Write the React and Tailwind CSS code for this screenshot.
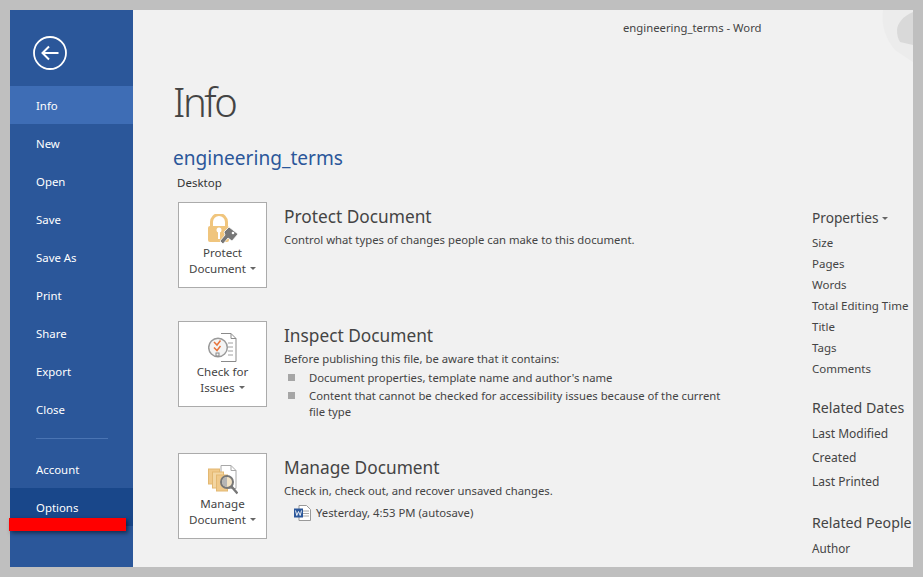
const font = "[font-family:'Noto_Sans','Open_Sans',sans-serif]";

const navTop = ['New', 'Open', 'Save', 'Save As', 'Print', 'Share', 'Export', 'Close'];
const props = ['Size', 'Pages', 'Words', 'Total Editing Time', 'Title', 'Tags', 'Comments'];

function Caret() {
  return <span className="inline-block ml-[4px] mb-[2px] align-middle w-0 h-0 border-x-[3px] border-x-transparent border-t-[3px] border-t-[#666]" />;
}

function LockIcon() {
  return (
    <svg width="30" height="30" viewBox="0 0 30 30">
      <path d="M3.500 12V8a7.500 7.500 0 0 1 15 0v4" fill="none" stroke="#f0c57d" strokeWidth="3" />
      <rect x="0" y="12" width="21" height="16" rx="2" fill="#f0c57d" />
      <circle cx="11" cy="16" r="2.500" fill="#fff" />
      <rect x="10" y="16" width="2" height="9" fill="#fff" />
      <path d="M21 13l9 7-6 7-4-3-5 6-3-3 5-6-1-3z" fill="#777" stroke="#fff" strokeWidth=".8" />
      <circle cx="25" cy="19" r="1.300" fill="#fff" />
    </svg>
  );
}

function CheckIcon() {
  return (
    <svg width="29" height="29" viewBox="0 0 29 29">
      <path d="M13 .5h10l5 5v23H13" fill="#fff" stroke="#8a8a8a" />
      <path d="M23 .5v5h5" fill="none" stroke="#8a8a8a" />
      <path d="M20 10h5M20 14h5M20 18h5M20 22h5" stroke="#a0a0a0" />
      <circle cx="10" cy="14.500" r="9.300" fill="#f4f4f4" stroke="#9a9a9a" strokeWidth="1.500" />
      <path d="M6 9l3 3 3.500-4.500M6 14.500l3 3 3.500-4.500" fill="none" stroke="#e8743b" strokeWidth="1.500" />
      <rect x="8" y="20" width="3" height="3" fill="none" stroke="#888" />
    </svg>
  );
}

function ManageIcon() {
  return (
    <svg width="30" height="30" viewBox="0 0 30 30">
      <path d="M13 .5h10l5 5v18H13z" fill="#fff" stroke="#a8a8a8" />
      <path d="M23 .5v5h5" fill="none" stroke="#a8a8a8" />
      <rect x="0.500" y="4" width="11" height="15" fill="#f0c98a" stroke="#e3b872" />
      <rect x="4.500" y="7" width="11" height="16" fill="#f3d6a3" stroke="#e3b872" />
      <rect x="8.500" y="10" width="11" height="16" fill="#f0c98a" stroke="#e3b872" />
      <circle cx="19" cy="17" r="6" fill="#f2e2c4" stroke="#777" strokeWidth="2" />
      <path d="M19 12a5 5 0 0 0 0 10z" fill="#b5b5b5" />
      <path d="M23.500 21.500l6 7" stroke="#777" strokeWidth="2.500" />
    </svg>
  );
}

function WordIcon() {
  return (
    <svg width="17" height="16" viewBox="0 0 17 16">
      <path d="M5 .5h7.500l4 4v11H5z" fill="#fff" stroke="#999" />
      <path d="M9 6h6M9 8.500h6M9 11h6" stroke="#aaa" />
      <rect x="0" y="3.500" width="9" height="9" fill="#2b579a" />
      <path d="M1.500 5.500l1.300 5 1.700-4 1.700 4 1.300-5" fill="none" stroke="#fff" strokeWidth=".9" />
    </svg>
  );
}

function ActionButton({ icon, line1, line2 }) {
  return (
    <div className="w-[89px] h-[86px] shrink-0 bg-white border border-[#ababab] flex flex-col items-center pt-[11px]">
      <div className="h-[31px] flex items-start justify-center">{icon}</div>
      <div className="text-[11.6px] leading-[16px] text-[#444] text-center whitespace-nowrap">
        <div>{line1}</div>
        <div>{line2}<Caret /></div>
      </div>
    </div>
  );
}

function Section({ icon, line1, line2, title, children, className }) {
  return (
    <div className={`flex h-[86px] ${className}`}>
      <ActionButton icon={icon} line1={line1} line2={line2} />
      <div className="ml-[17px] w-[440px] text-[#444]">
        <h2 className="text-[17.3px] leading-[26px] mt-[2px] text-[#444]">{title}</h2>
        {children}
      </div>
    </div>
  );
}

function Bullet({ children, className = 'mt-[2px]' }) {
  return (
    <div className={`flex text-[11.3px] leading-[16px] ${className}`}>
      <span className="w-[7px] h-[7px] bg-[#a6a6a6] mt-[4px] ml-[4px] mr-[14px] shrink-0" />
      <span>{children}</span>
    </div>
  );
}

function NavItem({ children, className = '' }) {
  return <div className={`h-[38px] flex items-center pl-[26px] pt-[2px] ${className}`}>{children}</div>;
}

export default function App() {
  return (
    <div className={`w-[923px] h-[577px] bg-[#bfbfbf] p-[10px] overflow-hidden relative ${font}`}>
      <div className="w-[903px] h-[557px] flex bg-[#f1f1f1] overflow-hidden relative">
        <aside className="w-[123px] shrink-0 bg-[#2b579a] text-white text-[11.4px] flex flex-col">
          <div className="h-[76px] pl-[23px] pt-[26px]">
            <svg width="34" height="34" viewBox="0 0 34 34" fill="none" stroke="#fff">
              <circle cx="17" cy="17" r="16" strokeWidth="1.800" />
              <path d="M9.500 17h16M16 10.500L9.500 17l6.500 6.500" strokeWidth="2" />
            </svg>
          </div>
          <NavItem className="bg-[#3e6db5]">Info</NavItem>
          {navTop.map((n) => <NavItem key={n}>{n}</NavItem>)}
          <div className="h-px w-[72px] bg-[#4a74b3] ml-[26px] mt-[10px] mb-[10px]" />
          <NavItem className="mt-px">Account</NavItem>
          <NavItem className="bg-[#19478a]">Options</NavItem>
        </aside>

        <main className="flex-1 min-w-0 text-[#444]">
          <div className="h-[36px] pl-[490px] pt-[9px] text-[11.3px] leading-[18px] whitespace-nowrap">engineering_terms - Word</div>
          <div className="flex">
            <div className="w-[679px] shrink-0 pl-[40px]">
              <h1 className="text-[40px] leading-[52px] font-light tracking-[-2.500px] text-[#444] mt-[30px]">Info</h1>
              <div className="text-[19.1px] leading-[28px] text-[#2b579a] mt-[16px]">engineering_terms</div>
              <div className="text-[11.5px] leading-[16px] ml-[4px] mt-[3px] text-[#333]">Desktop</div>
              <Section className="mt-[11px] ml-[5px]" icon={<LockIcon />} line1="Protect" line2="Document" title="Protect Document">
                <p className="text-[11.3px] leading-[17px] mt-px">Control what types of changes people can make to this document.</p>
              </Section>
              <Section className="mt-[33px] ml-[5px]" icon={<CheckIcon />} line1="Check for" line2="Issues" title="Inspect Document">
                <p className="text-[11.3px] leading-[17px] mt-px">Before publishing this file, be aware that it contains:</p>
                <Bullet className="mt-[3px]">Document properties, template name and author's name</Bullet>
                <Bullet>Content that cannot be checked for accessibility issues because of the current file type</Bullet>
              </Section>
              <Section className="mt-[46px] ml-[5px]" icon={<ManageIcon />} line1="Manage" line2="Document" title="Manage Document">
                <p className="text-[11.3px] leading-[17px] mt-px">Check in, check out, and recover unsaved changes.</p>
                <div className="flex items-center gap-[5px] ml-[10px] mt-[5px] text-[11.3px] leading-[17px]">
                  <WordIcon />
                  <span>Yesterday, 4:53 PM (autosave)</span>
                </div>
              </Section>
            </div>
            <div className="flex-1 min-w-0 whitespace-nowrap pt-[162px]">
              <div className="text-[13.7px] leading-[20px]">Properties<Caret /></div>
              <div className="mt-[4px]">
                {props.map((p) => <div key={p} className="h-[21px] text-[11.5px] leading-[21px]">{p}</div>)}
              </div>
              <div className="text-[14.2px] leading-[20px] mt-[19px]">Related Dates</div>
              <div className="mt-[4px]">
                {['Last Modified', 'Created', 'Last Printed'].map((p) => <div key={p} className="h-[24px] text-[12px] leading-[24px]">{p}</div>)}
              </div>
              <div className="text-[14.2px] leading-[20px] mt-[19px]">Related People</div>
              <div className="text-[11.7px] leading-[21px] mt-[5px]">Author</div>
            </div>
          </div>
        </main>

        <svg className="absolute top-0 right-0" width="44" height="52" viewBox="0 0 44 52">
          <path d="M44 0H14c-2 14 2 28 12 40l18 12z" fill="#ececec" />
          <path d="M44 2C34 6 28 14 28 20c0 5 1 9 3 12l13 3z" fill="#d9d9d9" />
        </svg>
      </div>
      <div className="absolute left-[9px] top-[518px] w-[117px] h-[13px] bg-[#ff0000] shadow-[2px_2px_4px_rgba(0,0,0,0.5)]" />
    </div>
  );
}
